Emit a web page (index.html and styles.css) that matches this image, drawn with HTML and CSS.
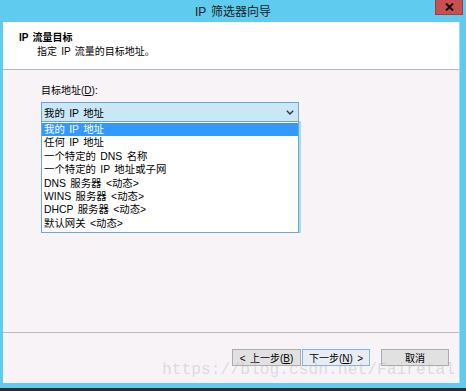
FILE: index.html
```html
<!DOCTYPE html>
<html lang="zh-CN">

<head>
    <meta charset="UTF-8">
    <meta name="viewport" content="width=device-width, initial-scale=1.0">
    <title>IP 筛选器向导</title>
    <link rel="stylesheet" href="styles.css">
</head>

<body>
    <div class="window">
        <div class="titlebar">
            <span class="title">IP 筛选器向导</span>
            <div class="close">
                <svg width="9" height="8" viewBox="0 0 9 8">
                    <path d="M1 0.5 L8 7.5 M8 0.5 L1 7.5" stroke="#111" stroke-width="2"/>
                </svg>
            </div>
        </div>

        <div class="content">
            <div class="header">
                <div class="header-title">IP 流量目标</div>
                <div class="header-sub">指定 IP 流量的目标地址。</div>
            </div>

            <div class="main">
                <label class="field-label">目标地址(<u>D</u>):</label>
                <div class="combo">
                    <span>我的 IP 地址</span>
                    <svg class="chevron" width="8" height="5" viewBox="0 0 8 5">
                        <path d="M0.8 0.8 L4 4 L7.2 0.8" fill="none" stroke="#333" stroke-width="1.4"/>
                    </svg>
                </div>
                <ul class="dropdown">
                    <li class="selected">我的 IP 地址</li>
                    <li>任何 IP 地址</li>
                    <li>一个特定的 DNS 名称</li>
                    <li>一个特定的 IP 地址或子网</li>
                    <li>DNS 服务器 &lt;动态&gt;</li>
                    <li>WINS 服务器 &lt;动态&gt;</li>
                    <li>DHCP 服务器 &lt;动态&gt;</li>
                    <li>默认网关 &lt;动态&gt;</li>
                </ul>
            </div>

            <div class="footer">
                <button class="btn">&lt; 上一步(<u>B</u>)</button>
                <button class="btn default">下一步(<u>N</u>) &gt;</button>
                <button class="btn cancel">取消</button>
            </div>
        </div>
    </div>
    <div class="taskbar"></div>
    <div class="watermark">https://blog.csdn.net/Fairetal</div>
</body>

</html>
```

FILE: styles.css
```css
body {
    margin: 0;
    width: 466px;
    height: 391px;
    overflow: hidden;
    background-color: #3a3a3a;
    font-family: "Liberation Sans", "Noto Sans CJK SC", sans-serif;
    font-size: 10px;
    word-spacing: 1.5px;
    color: #000;
    position: relative;
}

.window {
    height: 388px;
    box-sizing: border-box;
    background-color: #5fcbef;
    padding: 0 6px 5px 3px;
    display: flex;
    flex-direction: column;
}

.titlebar {
    height: 22px;
    position: relative;
    display: flex;
    justify-content: center;
    align-items: center;
}

.title {
    font-size: 12px;
    color: #1b1b1b;
    margin-left: 3px;
    margin-top: -1px;
}

.close {
    position: absolute;
    top: 0;
    right: -3px;
    width: 28px;
    height: 15px;
    box-sizing: border-box;
    background-color: #c75050;
    border: 1px solid #9b3e3e;
    border-top: none;
    display: flex;
    justify-content: center;
    align-items: center;
}

.content {
    flex: 1;
    display: flex;
    flex-direction: column;
    background-color: #f7f3f7;
    border-right: 1px solid #9fdcf3;
}

.header {
    height: 48px;
    box-sizing: border-box;
    background-color: #fff;
    border-bottom: 1px solid #b9b6b9;
    padding: 9px 0 0 16px;
    line-height: 14px;
}

.header-title {
    font-weight: bold;
}

.header-sub {
    padding-left: 18px;
}

.main {
    height: 263px;
    box-sizing: border-box;
    border-bottom: 1px solid #bdbabd;
    padding: 14px 0 0 38px;
    display: flex;
    flex-direction: column;
}

.field-label {
    line-height: 14px;
    margin-bottom: 4px;
}

.combo {
    width: 258px;
    height: 20px;
    box-sizing: border-box;
    background-color: #c9e7f7;
    border: 1px solid #6da9cf;
    display: flex;
    align-items: center;
    justify-content: space-between;
    padding: 0 4px 0 2px;
    font-size: 10.4px;
}

.dropdown {
    list-style: none;
    margin: -1px 0 0 0;
    padding: 1px 0 2px 0;
    width: 258px;
    box-sizing: border-box;
    background-color: #fff;
    border: 1px solid #6da9cf;
    box-shadow: 2px 0 0 #a6dcf2;
    font-size: 10.4px;
}

.dropdown li {
    height: 13.4px;
    line-height: 13.4px;
    padding-left: 2px;
    white-space: nowrap;
}

.dropdown li.selected {
    background-color: #3399ff;
    color: #fff;
}

.footer {
    flex: 1;
    display: flex;
    align-items: flex-start;
    padding: 16px 10px 0 0;
    justify-content: flex-end;
}

.btn {
    width: 69px;
    height: 17px;
    padding: 0;
    font-family: inherit;
    font-size: 10px;
    word-spacing: 1.5px;
    background-color: #e1e1e1;
    border: 1px solid #adadad;
    color: #000;
}

.btn.default {
    width: 68px;
    margin-left: 1px;
    background-color: #e7edf3;
    border-color: #7fb6de;
}

.btn.cancel {
    width: 68px;
    margin-left: 11px;
}

.taskbar {
    height: 3px;
    background-color: #2c2c2c;
}

.watermark {
    position: absolute;
    left: 162px;
    top: 360px;
    font-family: "Liberation Mono", monospace;
    font-size: 16.3px;
    word-spacing: 0;
    color: rgba(170, 170, 180, 0.35);
    white-space: nowrap;
}
```
